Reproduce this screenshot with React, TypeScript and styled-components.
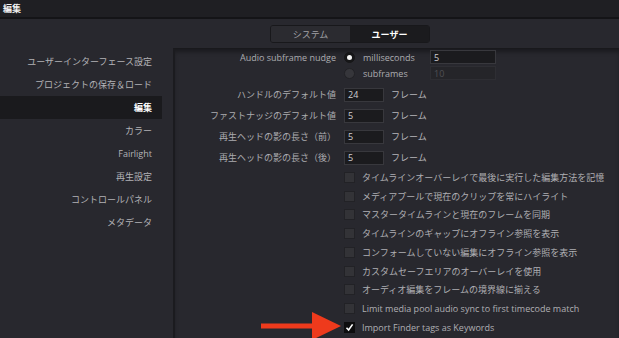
import React from "react";
import styled, { createGlobalStyle } from "styled-components";

const GlobalStyle = createGlobalStyle`
    html, body {
        margin: 0;
        padding: 0;
        background: #28282e;
    }
    body {
        font-family: "Open Sans", "Noto Sans CJK JP", sans-serif;
        font-size: 9px;
        color: #b0b0b4;
    }
`;

const Window = styled.div`
    position: relative;
    width: 619px;
    height: 338px;
    overflow: hidden;
    background: #28282e;
`;

const TitleBar = styled.div`
    height: 17px;
    padding-left: 3px;
    display: flex;
    align-items: center;
    background: #1f1f23;
    border-bottom: 2px solid #141417;
    color: #f2f2f2;
    font-weight: 700;
    font-size: 9px;
`;

const TabRow = styled.div`
    height: 29px;
    padding: 6px 0 0 270px;
    box-sizing: border-box;
`;

const TabGroup = styled.div`
    display: inline-flex;
    height: 18px;
    border: 1px solid #18181b;
    border-radius: 3px;
    overflow: hidden;
    box-sizing: border-box;
`;

const Tab = styled.div<{ active?: boolean }>`
    width: 79px;
    display: flex;
    align-items: center;
    justify-content: center;
    background: ${p => (p.active ? "#1b1b1e" : "#2b2b30")};
    color: ${p => (p.active ? "#ffffff" : "#a2a2a6")};
    font-weight: ${p => (p.active ? 700 : 400)};
`;

const Body = styled.div`
    display: flex;
    height: 290px;
`;

const Sidebar = styled.div`
    width: 173px;
    flex-shrink: 0;
    padding-top: 1.5px;
    box-sizing: border-box;
`;

const SideItem = styled.div<{ active?: boolean }>`
    width: 162px;
    height: 23px;
    padding-right: 10px;
    box-sizing: border-box;
    display: flex;
    align-items: center;
    justify-content: flex-end;
    background: ${p => (p.active ? "#1a1a1d" : "transparent")};
    color: ${p => (p.active ? "#ffffff" : "#b2b2b6")};
    font-weight: ${p => (p.active ? 700 : 400)};
`;

const Panel = styled.div`
    flex: 1;
    border-left: 2px solid #1b1b1f;
    border-top: 1px solid #19191c;
    box-shadow: inset 0 4px 4px -1px rgba(0, 0, 0, 0.35);
`;

const Row = styled.div<{ h: number; mt?: number }>`
    display: grid;
    grid-template-columns: 161px 1fr;
    column-gap: 8px;
    align-items: center;
    height: ${p => p.h}px;
    margin-top: ${p => p.mt ?? 0}px;
`;

const Label = styled.div`
    text-align: right;
    white-space: nowrap;
    color: #acacb0;
`;

const Control = styled.div<{ gap: number }>`
    display: flex;
    align-items: center;
    gap: ${p => p.gap}px;
    white-space: nowrap;
`;

const Radio = styled.div<{ checked?: boolean }>`
    width: 11px;
    height: 11px;
    box-sizing: border-box;
    border-radius: 50%;
    background: ${p => (p.checked ? "#161618" : "#36363b")};
    border: 1px solid ${p => (p.checked ? "#161618" : "#222226")};
    display: flex;
    align-items: center;
    justify-content: center;
    &::after {
        content: "";
        width: 5px;
        height: 5px;
        border-radius: 50%;
        background: ${p => (p.checked ? "#f4f4f4" : "transparent")};
    }
`;

const OptionText = styled.span`
    width: 59px;
    color: #acacb0;
`;

const Input = styled.div<{ w: number; disabled?: boolean }>`
    width: ${p => p.w}px;
    height: 14px;
    box-sizing: border-box;
    padding-left: 3px;
    display: flex;
    align-items: center;
    background: ${p => (p.disabled ? "#252529" : "#1b1b1e")};
    border: 1px solid ${p => (p.disabled ? "#2e2e33" : "#38383d")};
    color: ${p => (p.disabled ? "#505054" : "#cdcdd0")};
`;

const Unit = styled.span`
    color: #b6b6ba;
`;

const Check = styled.div<{ checked?: boolean }>`
    width: 11px;
    height: 11px;
    box-sizing: border-box;
    background: ${p => (p.checked ? "#0d0d0e" : "#333337")};
    border: 1px solid ${p => (p.checked ? "#0d0d0e" : "#222226")};
    display: flex;
    align-items: center;
    justify-content: center;
`;

const CheckText = styled.span`
    color: #afafb3;
`;

const Arrow = styled.svg`
    position: absolute;
    left: 258px;
    top: 308px;
`;

const sideItems = [
    "ユーザーインターフェース設定",
    "プロジェクトの保存＆ロード",
    "編集",
    "カラー",
    "Fairlight",
    "再生設定",
    "コントロールパネル",
    "メタデータ",
];

const frameRows = [
    { label: "ハンドルのデフォルト値", value: "24" },
    { label: "ファストナッジのデフォルト値", value: "5" },
    { label: "再生ヘッドの影の長さ（前）", value: "5" },
    { label: "再生ヘッドの影の長さ（後）", value: "5" },
];

const checkRows = [
    { text: "タイムラインオーバーレイで最後に実行した編集方法を記憶", checked: false },
    { text: "メディアプールで現在のクリップを常にハイライト", checked: false },
    { text: "マスタータイムラインと現在のフレームを同期", checked: false },
    { text: "タイムラインのギャップにオフライン参照を表示", checked: false },
    { text: "コンフォームしていない編集にオフライン参照を表示", checked: false },
    { text: "カスタムセーフエリアのオーバーレイを使用", checked: false },
    { text: "オーディオ編集をフレームの境界線に揃える", checked: false },
    { text: "Limit media pool audio sync to first timecode match", checked: false },
    { text: "Import Finder tags as Keywords", checked: true },
];

export default function App() {
    return (
        <>
            <GlobalStyle />
            <Window>
                <TitleBar>編集</TitleBar>
                <TabRow>
                    <TabGroup>
                        <Tab>システム</Tab>
                        <Tab active>ユーザー</Tab>
                    </TabGroup>
                </TabRow>
                <Body>
                    <Sidebar>
                        {sideItems.map(item => (
                            <SideItem key={item} active={item === "編集"}>
                                {item}
                            </SideItem>
                        ))}
                    </Sidebar>
                    <Panel>
                        <Row h={14} mt={1}>
                            <Label>Audio subframe nudge</Label>
                            <Control gap={8}>
                                <Radio checked />
                                <OptionText>milliseconds</OptionText>
                                <Input w={66}>5</Input>
                            </Control>
                        </Row>
                        <Row h={14} mt={2}>
                            <Label />
                            <Control gap={8}>
                                <Radio />
                                <OptionText>subframes</OptionText>
                                <Input w={66} disabled>
                                    10
                                </Input>
                            </Control>
                        </Row>
                        {frameRows.map((r, i) => (
                            <Row key={r.label} h={21} mt={i === 0 ? 4 : 0}>
                                <Label>{r.label}</Label>
                                <Control gap={7}>
                                    <Input w={40}>{r.value}</Input>
                                    <Unit>フレーム</Unit>
                                </Control>
                            </Row>
                        ))}
                        {checkRows.map(r => (
                            <Row key={r.text} h={18.75}>
                                <Label />
                                <Control gap={7}>
                                    <Check checked={r.checked}>
                                        {r.checked && (
                                            <svg width="9" height="9" viewBox="0 0 9 9">
                                                <polyline
                                                    points="1.5,4.8 3.6,7 7.6,1.4"
                                                    fill="none"
                                                    stroke="#ffffff"
                                                    strokeWidth="1.6"
                                                />
                                            </svg>
                                        )}
                                    </Check>
                                    <CheckText>{r.text}</CheckText>
                                </Control>
                            </Row>
                        ))}
                    </Panel>
                </Body>
                <Arrow width="90" height="32" viewBox="0 0 90 32">
                    <rect x="3" y="15.5" width="52" height="5" fill="#ee3a1c" />
                    <polygon points="54,4 83,18 54,32" fill="#ee3a1c" />
                </Arrow>
            </Window>
        </>
    );
}
